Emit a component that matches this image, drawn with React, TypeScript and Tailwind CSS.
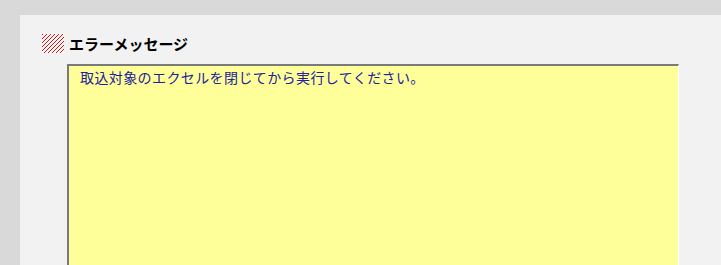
const HATCH: { x: number; y: number }[] = [];
for (let y = 0; y < 19; y++) {
    for (let x = 0; x < 22; x++) {
        if ((x + y) % 4 === 0) HATCH.push({ x, y });
    }
}

export default function App() {
    return (
        <div className="w-[721px] h-[265px] overflow-hidden bg-[#d9d9d9] pt-[15px] pl-[20px]">
            <div className="h-full bg-[#f2f2f2] pt-[19px] pl-[22px]">
                <div className="flex items-center gap-[5px] h-[19px]">
                    <svg width="22" height="19" viewBox="0 0 22 19" className="shrink-0" shapeRendering="crispEdges">
                        <rect width="22" height="19" fill="#ffffff" />
                        {HATCH.map((p) => (
                            <rect key={`${p.x}-${p.y}`} x={p.x} y={p.y} width="1" height="1" fill="#ff0000" />
                        ))}
                    </svg>
                    <span
                        className="text-[15px] font-bold text-black leading-none"
                        style={{ fontFamily: '"Noto Sans CJK JP", sans-serif' }}
                    >
                        エラーメッセージ
                    </span>
                </div>
                <div
                    className="mt-[11px] ml-[25px] w-[612px] h-[220px] bg-[#ffff99] border-t-2 border-l-2 border-[#7a7a7a] border-r border-r-white pl-[11px] pt-[2px] text-[14px] leading-[18px] tracking-[0.4px] text-[#20209c]"
                    style={{ fontFamily: '"Noto Sans CJK JP", sans-serif' }}
                >
                    取込対象のエクセルを閉じてから実行してください。
                </div>
            </div>
        </div>
    );
}
